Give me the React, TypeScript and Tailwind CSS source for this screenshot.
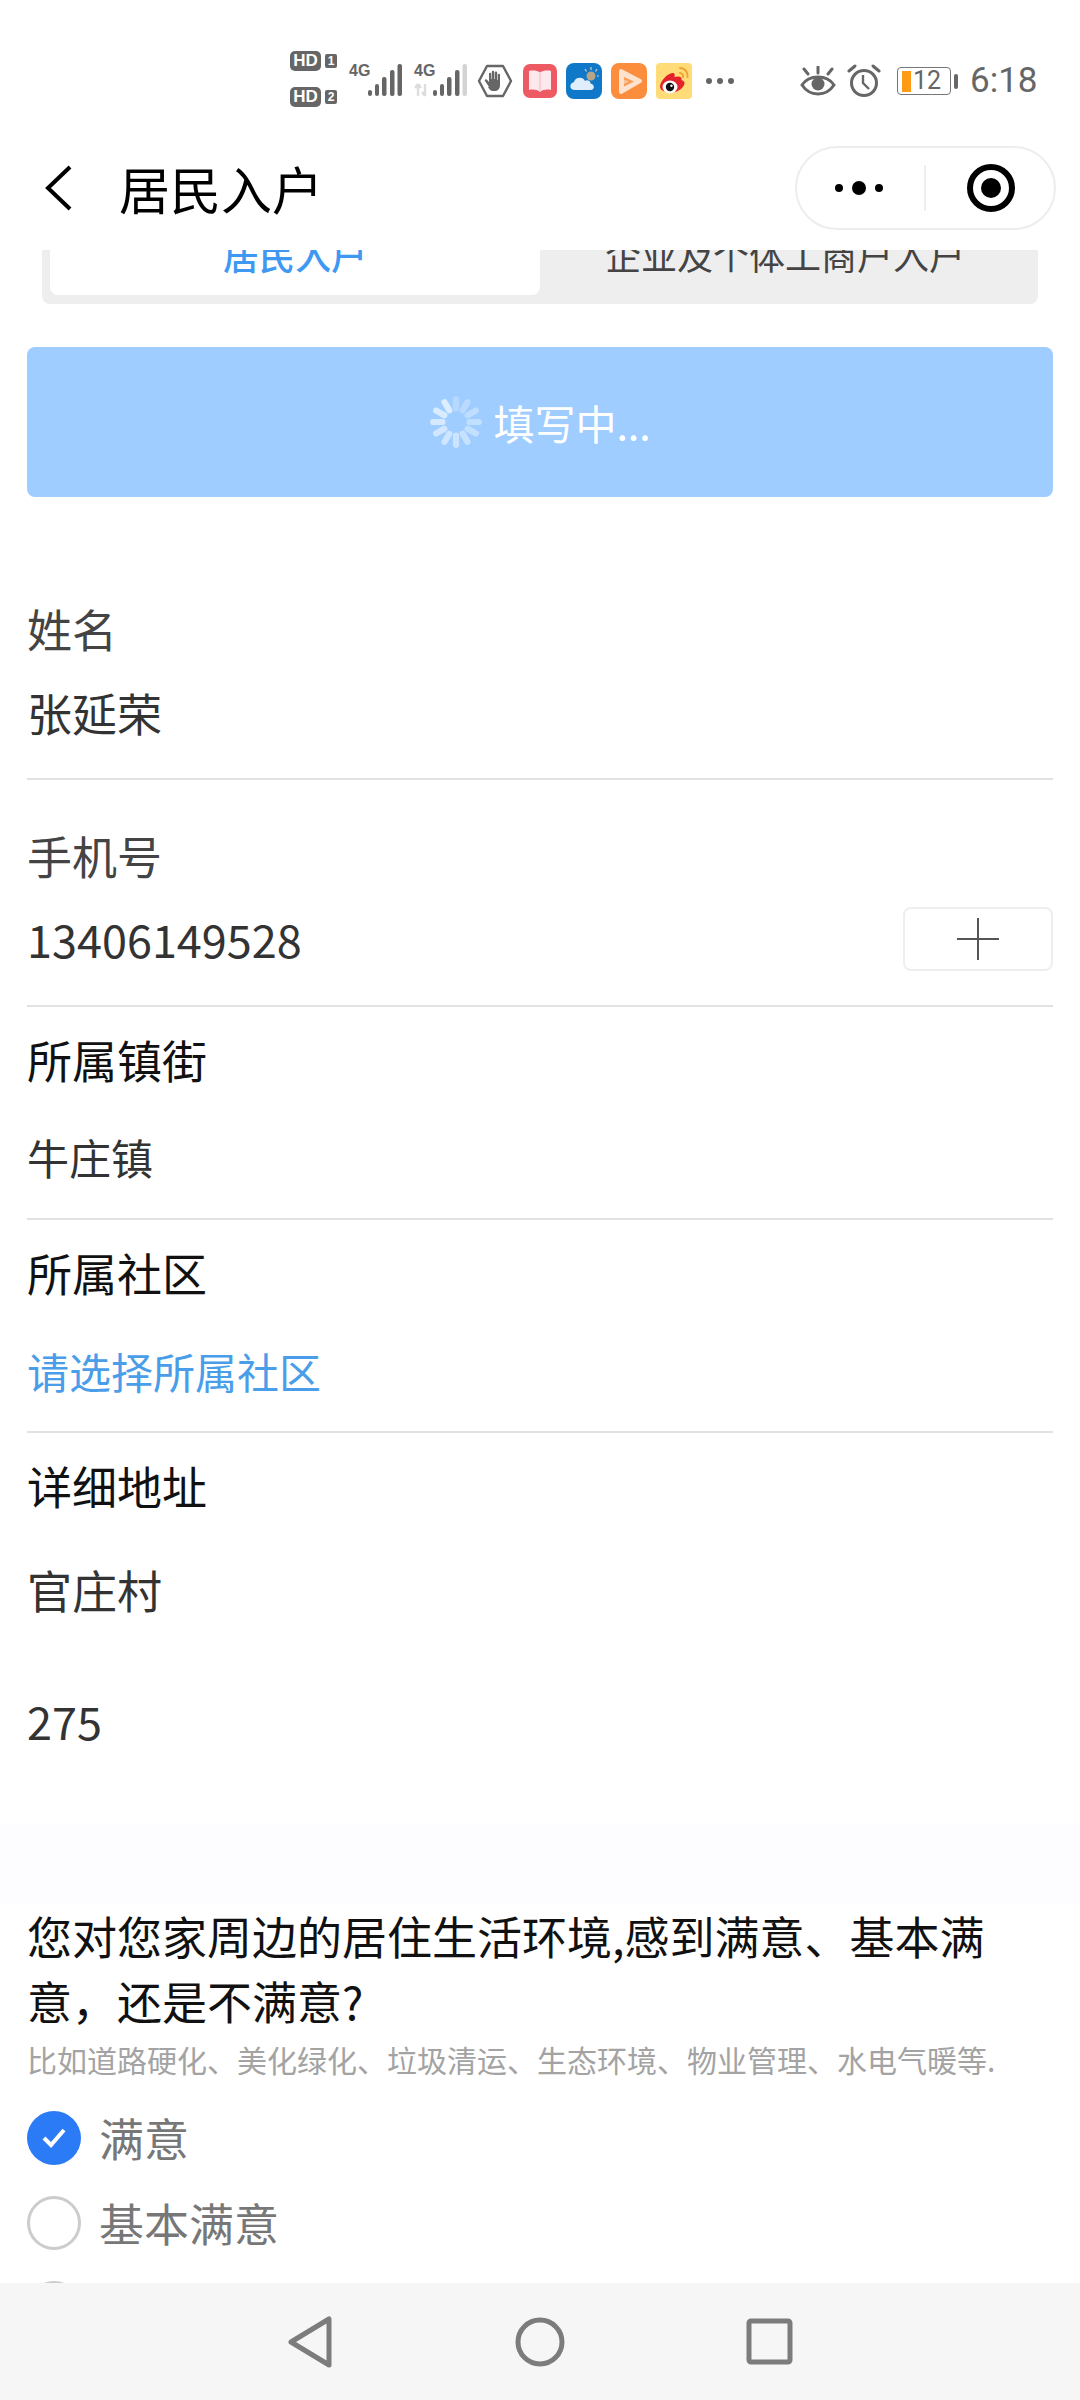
import React from "react";

function HdBadge({ n }: { n: string }) {
  return (
    <div className="flex items-center h-[20px] gap-[4px]">
      <span className="w-[31px] h-[20px] rounded-[5px] bg-[#666] text-white text-[17px] leading-[20px] font-bold text-center font-['Liberation_Sans',sans-serif]">HD</span>
      <span className="w-[12px] h-[14px] rounded-[2px] bg-[#666] text-white text-[12px] leading-[14px] font-bold text-center font-['Liberation_Sans',sans-serif]">{n}</span>
    </div>
  );
}

function Signal({ dim, arrows }: { dim?: boolean; arrows?: boolean }) {
  return (
    <div className="relative w-[53px] h-[34px]">
      <span className="absolute left-0 top-0 text-[16px] leading-[16px] font-bold text-[#666] font-['Liberation_Sans',sans-serif]">4G</span>
      <svg className="absolute left-0 top-0" width="53" height="34" viewBox="0 0 53 34">
        {arrows && <path d="M4 33V21M4 21l-3 4M4 21l3 4M11 21v12M11 33l-3-4" stroke="#ddd" strokeWidth="2.4" fill="none" />}
        <rect x="19" y="27" width="4" height="6" rx="2" fill="#666" />
        <rect x="26" y="21" width="4" height="12" rx="2" fill="#666" />
        <rect x="33" y="14" width="4.5" height="19" rx="2" fill="#666" />
        <rect x="41" y="7" width="4.5" height="26" rx="2" fill="#666" />
        <rect x="48.5" y="1" width="4.5" height="32" rx="2" fill={dim ? "#d4d4d4" : "#666"} />
      </svg>
    </div>
  );
}

function HandIcon() {
  return (
    <svg width="36" height="36" viewBox="0 0 36 36">
      <path d="M10 3h16l8 15-8 15H10L2 18z" fill="none" stroke="#666" strokeWidth="2.4" strokeLinejoin="round" />
      <path d="M12 24l-4-6c-.8-1.4 1-2.4 2-1.2l2 2.2V11c0-1.6 2.2-1.6 2.2 0v5h.6V9c0-1.6 2.4-1.6 2.4 0v7h.6V9.6c0-1.6 2.4-1.6 2.4 0V17h.6v-5c0-1.6 2.2-1.6 2.2 0v10c0 4-2.4 6-5.4 6h-2c-2 0-3.4-1.8-4.6-4z" fill="#666" />
    </svg>
  );
}

function BookIcon() {
  return (
    <svg width="34" height="34" viewBox="0 0 34 34">
      <rect width="34" height="34" rx="7" fill="#ee5a64" />
      <path d="M6 7c4-1 8-.5 11 1.5C20 6.5 24 6 28 7v19c-4-1-8-.5-11 2-3-2.5-7-3-11-2z" fill="#fde8ee" />
      <path d="M17 9v18" stroke="#f3b6c0" strokeWidth="1" />
    </svg>
  );
}

function WeatherIcon() {
  return (
    <svg width="36" height="36" viewBox="0 0 36 36">
      <rect width="36" height="36" rx="8" fill="#0f78c9" />
      <circle cx="25" cy="13" r="4.5" fill="#b8a585" />
      <path d="M25 4v3M33 13h-2M19 6l1.5 2.5M31 6l-1.5 2.5" stroke="#d4cfb8" strokeWidth="1.2" />
      <path d="M9 27c-6 0-6-7-1-8 1-5 9-6 11-1 2-2 6 0 5.5 2.5 4 .5 5 6.5 0 6.5z" fill="#dfeefa" />
    </svg>
  );
}

function VideoIcon() {
  return (
    <svg width="36" height="36" viewBox="0 0 36 36">
      <rect width="36" height="36" rx="8" fill="#fb8d3c" />
      <path d="M10 8l19 10-19 11z" fill="#fde3cf" stroke="#fde3cf" strokeWidth="4" strokeLinejoin="round" />
      <path d="M13 14l10 4.5-10 5z" fill="#fb9a52" />
      <path d="M13 16.5l5 2-5 2.5z" fill="#f6c49a" />
    </svg>
  );
}

function WeiboIcon() {
  return (
    <svg width="36" height="36" viewBox="0 0 36 36">
      <rect width="36" height="36" rx="4" fill="#ffdc78" />
      <path d="M4 24c0-6 7-13 12-14 3-.5 3 2 2.5 4 3-1 8-1 7 3 3 1 4 3 2 6-3 5-10 7-14 6.5-5-.5-9.5-2.5-9.5-5.5z" fill="#e4222c" />
      <ellipse cx="14" cy="24" rx="7.5" ry="6.5" fill="#fff" />
      <circle cx="14" cy="24" r="4.2" fill="#111" />
      <circle cx="15.5" cy="22.8" r="1.2" fill="#fff" />
      <path d="M24 5c5 0 8 4 7.5 9M24 10c2 0 3.5 2 3 4" fill="none" stroke="#f3a130" strokeWidth="2" strokeLinecap="round" />
    </svg>
  );
}

function EyeIcon() {
  return (
    <svg width="36" height="30" viewBox="0 0 36 30">
      <path d="M2 19c4-6 9-8 16-8s12 2 16 8c-4 6-9 9-16 9S6 25 2 19z" fill="none" stroke="#666" strokeWidth="3" />
      <circle cx="18" cy="18" r="6.5" fill="#666" />
      <path d="M18 1v6M4 3l4 5M32 3l-4 5" stroke="#666" strokeWidth="3" strokeLinecap="round" />
    </svg>
  );
}

function AlarmIcon() {
  return (
    <svg width="34" height="34" viewBox="0 0 34 34">
      <circle cx="17" cy="19" r="12.5" fill="none" stroke="#666" strokeWidth="3" />
      <path d="M16 11v8l6 6" fill="none" stroke="#666" strokeWidth="2.4" />
      <path d="M2 7l6-5M32 7l-6-5" stroke="#666" strokeWidth="3" strokeLinecap="round" />
    </svg>
  );
}

function Battery() {
  return (
    <div className="flex items-center gap-[3px]">
      <div className="w-[54px] h-[28px] rounded-[4px] border-[1.5px] border-[#777] flex items-center pl-[4px] gap-[2px]">
        <span className="w-[9px] h-[21px] bg-[#ff9a14]" />
        <span className="text-[25px] leading-[26px] text-[#666] font-['Roboto',sans-serif]">12</span>
      </div>
      <span className="w-[4px] h-[15px] rounded-full bg-[#666]" />
    </div>
  );
}

function StatusBar() {
  return (
    <div className="h-[110px] flex items-center pl-[290px] pt-[52px]">
      <div className="flex flex-col gap-[16px] -mt-[4px]">
        <HdBadge n="1" />
        <HdBadge n="2" />
      </div>
      <div className="ml-[12px] -mt-[2px]"><Signal /></div>
      <div className="ml-[12px] -mt-[2px]"><Signal dim arrows /></div>
      <div className="ml-[10px] -mt-[1px]"><HandIcon /></div>
      <div className="ml-[10px] -mt-[1px]"><BookIcon /></div>
      <div className="ml-[9px] -mt-[1px]"><WeatherIcon /></div>
      <div className="ml-[9px] -mt-[1px]"><VideoIcon /></div>
      <div className="ml-[9px] -mt-[1px]"><WeiboIcon /></div>
      <div className="ml-[14px] flex gap-[5px] -mt-[1px]">
        <span className="w-[6px] h-[6px] rounded-full bg-[#666]" />
        <span className="w-[6px] h-[6px] rounded-full bg-[#666]" />
        <span className="w-[6px] h-[6px] rounded-full bg-[#666]" />
      </div>
      <div className="ml-[66px] -mt-[1px]"><EyeIcon /></div>
      <div className="ml-[11px] -mt-[1px]"><AlarmIcon /></div>
      <div className="ml-[16px]"><Battery /></div>
      <span className="ml-[12px] text-[35px] leading-[40px] text-[#666] font-['Roboto',sans-serif]">6:18</span>
    </div>
  );
}

function NavBar() {
  return (
    <div className="h-[140px] flex items-center pl-[44px] pr-[24px] pt-[16px]">
      <svg width="30" height="46" viewBox="0 0 30 46">
        <path d="M26 2L4 23l22 21" fill="none" stroke="#000" strokeWidth="4" />
      </svg>
      <h1 className="ml-[45px] text-[51px] leading-[60px] font-normal text-black">居民入户</h1>
      <div className="ml-auto w-[261px] h-[84px] rounded-full border-2 border-[#ededed] flex items-center">
        <div className="w-[127px] flex items-center justify-center gap-[9px] pr-[4px]">
          <span className="w-[8px] h-[8px] rounded-full bg-black" />
          <span className="w-[14px] h-[14px] rounded-full bg-black" />
          <span className="w-[8px] h-[8px] rounded-full bg-black" />
        </div>
        <div className="w-[2px] h-[46px] bg-[#eeeeee]" />
        <div className="flex-1 flex items-center justify-center pl-[2px]">
          <svg width="48" height="48" viewBox="0 0 48 48">
            <circle cx="24" cy="24" r="21" fill="none" stroke="#000" strokeWidth="6" />
            <circle cx="24" cy="24" r="10" fill="#000" />
          </svg>
        </div>
      </div>
    </div>
  );
}

function Spinner() {
  const petals = [0, 30, 60, 90, 120, 150, 180, 210, 240, 270, 300, 330];
  return (
    <svg width="54" height="54" viewBox="0 0 52 52">
      {petals.map((deg, i) => (
        <rect
          key={deg}
          x="23"
          y="1"
          width="6"
          height="15"
          rx="3"
          fill="#fff"
          opacity={0.25 + (i % 12) * 0.035}
          transform={`rotate(${deg} 26 26)`}
        />
      ))}
    </svg>
  );
}

function Field({
  label,
  labelClass,
  children,
  className,
}: {
  label: string;
  labelClass: string;
  children: React.ReactNode;
  className: string;
}) {
  return (
    <div className={`mx-[27px] ${className}`}>
      <div className={`text-[45px] leading-[56px] ${labelClass}`}>{label}</div>
      {children}
    </div>
  );
}

function RadioRow({ checked, text }: { checked?: boolean; text: string }) {
  return (
    <div className="flex items-center h-[54px] px-[27px]">
      {checked ? (
        <span className="w-[54px] h-[54px] rounded-full bg-[#2b7bf6] flex items-center justify-center">
          <svg width="34" height="28" viewBox="0 0 34 28">
            <path d="M7 14l7 7L27 6" fill="none" stroke="#fff" strokeWidth="4" />
          </svg>
        </span>
      ) : (
        <span className="w-[54px] h-[54px] rounded-full border-[3px] border-[#cccccc]" />
      )}
      <span className="ml-[18px] text-[45px] leading-[56px] text-[#777]">{text}</span>
    </div>
  );
}

export default function App() {
  return (
    <div className="w-[1080px] h-[2400px] bg-white flex flex-col overflow-hidden font-['Noto_Sans_CJK_SC','Noto_Sans',sans-serif]">
      <header className="shrink-0 bg-white">
        <StatusBar />
        <NavBar />
      </header>

      <main className="flex-1 min-h-0 overflow-hidden">
        {/* the form is scrolled a little, so the tab strip sits cut off under the header */}
        <div className="-mt-[26px]">
          <div className="mx-[42px] h-[80px] bg-[#eeeeee] rounded-b-[8px] flex pl-[8px] pb-[9px]">
            <div className="w-[490px] bg-white rounded-b-[8px] flex items-center justify-center pb-[12px] text-[36px] font-medium text-[#3f99f2]">居民入户</div>
            <div className="flex-1 flex items-center justify-center pb-[12px] text-[36px] text-[#444] pr-[8px]">企业及个体工商户入户</div>
          </div>

          <div className="mt-[43px] mx-[27px] h-[150px] rounded-[8px] bg-[#9fcdff] flex items-center justify-center gap-[10px]">
            <Spinner />
            <span className="text-[41px] leading-[50px] text-white">填写中...</span>
          </div>

          <Field label="姓名" labelClass="text-[#444]" className="mt-[104px] pb-[37px] border-b-2 border-[#e2e2e2]">
            <div className="mt-[28px] text-[45px] leading-[56px] text-[#333]">张延荣</div>
          </Field>

          <Field label="手机号" labelClass="text-[#444]" className="pt-[48px] pb-[34px] border-b-2 border-[#e2e2e2]">
            <div className="mt-[23px] flex items-center justify-between h-[64px]">
              <span className="text-[45px] leading-[56px] text-[#333]">13406149528</span>
              <span className="w-[150px] h-[64px] rounded-[8px] border-2 border-[#eeeeee] flex items-center justify-center">
                <svg width="44" height="44" viewBox="0 0 44 44">
                  <path d="M22 1v42M1 22h42" stroke="#555" strokeWidth="2" />
                </svg>
              </span>
            </div>
          </Field>

          <Field label="所属镇街" labelClass="text-[#111]" className="pt-[25px] pb-[33px] border-b-2 border-[#e2e2e2]">
            <div className="mt-[41px] text-[42px] leading-[56px] text-[#333]">牛庄镇</div>
          </Field>

          <Field label="所属社区" labelClass="text-[#111]" className="pt-[25px] pb-[32px] border-b-2 border-[#e2e2e2]">
            <div className="mt-[42px] text-[42px] leading-[56px] text-[#4a9de8]">请选择所属社区</div>
          </Field>

          <Field label="详细地址" labelClass="text-[#111]" className="pt-[25px]">
            <div className="mt-[48px] text-[45px] leading-[56px] text-[#333]">官庄村</div>
            <div className="mt-[75px] text-[45px] leading-[56px] text-[#333]">275</div>
          </Field>

          <div className="mt-[76px] h-[78px] bg-[#fdfcfe]" />

          <div className="px-[27px]">
            <p className="text-[45px] leading-[65px] text-[#111]">您对您家周边的居住生活环境,感到满意、基本满意，还是不满意?</p>
            <p className="mt-[6px] text-[30px] leading-[40px] text-[#a3a3a3] whitespace-nowrap">比如道路硬化、美化绿化、垃圾清运、生态环境、物业管理、水电气暖等.</p>
          </div>

          <div className="mt-[32px] flex flex-col gap-[31px]">
            <RadioRow checked text="满意" />
            <RadioRow text="基本满意" />
            <RadioRow text="不满意" />
          </div>
        </div>
      </main>

      <footer className="shrink-0 h-[117px] bg-[#f6f6f6] flex items-center justify-center gap-[170px]">
        <svg width="60" height="54" viewBox="0 0 60 54">
          <path d="M49 4v46L11 27z" fill="none" stroke="#7c7c7c" strokeWidth="5" strokeLinejoin="round" />
        </svg>
        <svg width="60" height="54" viewBox="0 0 60 54">
          <circle cx="30" cy="27" r="22" fill="none" stroke="#7c7c7c" strokeWidth="5" />
        </svg>
        <svg width="60" height="54" viewBox="0 0 60 54">
          <rect x="9" y="6" width="41" height="41" rx="2" fill="none" stroke="#7c7c7c" strokeWidth="5" />
        </svg>
      </footer>
    </div>
  );
}
